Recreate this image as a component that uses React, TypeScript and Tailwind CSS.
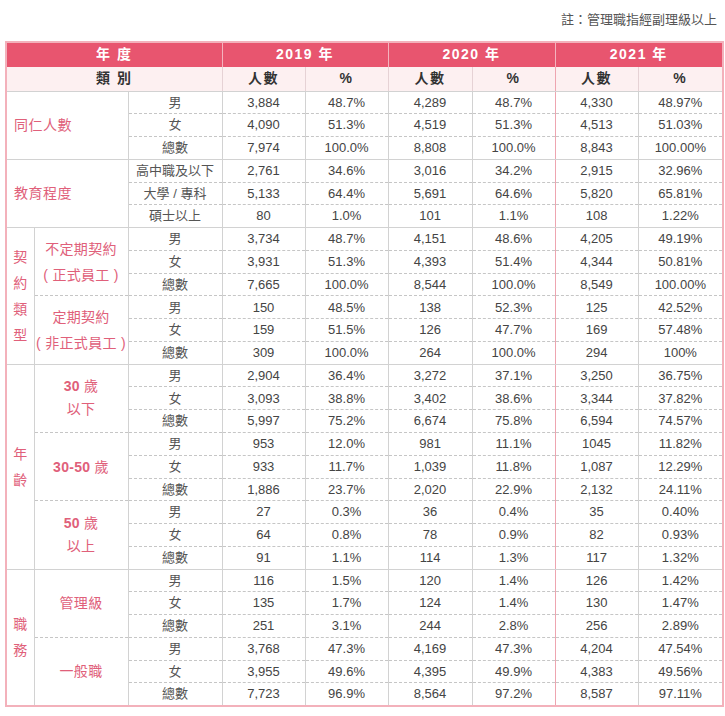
import React from "react";

type Row = { sub: string; v: string[] };
type Sub = { label: React.ReactNode; rows: Row[] };
type Section = { label: React.ReactNode; wide?: boolean; subs: Sub[] };

const L_GRAY = "[border-left:1px_solid_#d2d2d2]";
const L_PINK = "[border-left:1px_solid_#eea5b0]";
const B_DASH = "[border-bottom:1px_dashed_#c6c6c6]";
const B_SOLID = "[border-bottom:1px_solid_#d2d2d2]";

const r = (sub: string, ...v: string[]): Row => ({ sub, v });

const sections: Section[] = [
  {
    label: "同仁人數",
    wide: true,
    subs: [
      {
        label: null,
        rows: [
          r("男", "3,884", "48.7%", "4,289", "48.7%", "4,330", "48.97%"),
          r("女", "4,090", "51.3%", "4,519", "51.3%", "4,513", "51.03%"),
          r("總數", "7,974", "100.0%", "8,808", "100.0%", "8,843", "100.00%"),
        ],
      },
    ],
  },
  {
    label: "教育程度",
    wide: true,
    subs: [
      {
        label: null,
        rows: [
          r("高中職及以下", "2,761", "34.6%", "3,016", "34.2%", "2,915", "32.96%"),
          r("大學 / 專科", "5,133", "64.4%", "5,691", "64.6%", "5,820", "65.81%"),
          r("碩士以上", "80", "1.0%", "101", "1.1%", "108", "1.22%"),
        ],
      },
    ],
  },
  {
    label: "契約類型",
    subs: [
      {
        label: (
          <>
            <div>不定期契約</div>
            <div>( 正式員工 )</div>
          </>
        ),
        rows: [
          r("男", "3,734", "48.7%", "4,151", "48.6%", "4,205", "49.19%"),
          r("女", "3,931", "51.3%", "4,393", "51.4%", "4,344", "50.81%"),
          r("總數", "7,665", "100.0%", "8,544", "100.0%", "8,549", "100.00%"),
        ],
      },
      {
        label: (
          <>
            <div>定期契約</div>
            <div>( 非正式員工 )</div>
          </>
        ),
        rows: [
          r("男", "150", "48.5%", "138", "52.3%", "125", "42.52%"),
          r("女", "159", "51.5%", "126", "47.7%", "169", "57.48%"),
          r("總數", "309", "100.0%", "264", "100.0%", "294", "100%"),
        ],
      },
    ],
  },
  {
    label: "年齡",
    subs: [
      {
        label: (
          <div className="leading-[23px]">
            <div>
              <span className="font-bold">30</span> 歲
            </div>
            <div>以下</div>
          </div>
        ),
        rows: [
          r("男", "2,904", "36.4%", "3,272", "37.1%", "3,250", "36.75%"),
          r("女", "3,093", "38.8%", "3,402", "38.6%", "3,344", "37.82%"),
          r("總數", "5,997", "75.2%", "6,674", "75.8%", "6,594", "74.57%"),
        ],
      },
      {
        label: (
          <div>
            <span className="font-bold">30-50</span> 歲
          </div>
        ),
        rows: [
          r("男", "953", "12.0%", "981", "11.1%", "1045", "11.82%"),
          r("女", "933", "11.7%", "1,039", "11.8%", "1,087", "12.29%"),
          r("總數", "1,886", "23.7%", "2,020", "22.9%", "2,132", "24.11%"),
        ],
      },
      {
        label: (
          <div className="leading-[23px]">
            <div>
              <span className="font-bold">50</span> 歲
            </div>
            <div>以上</div>
          </div>
        ),
        rows: [
          r("男", "27", "0.3%", "36", "0.4%", "35", "0.40%"),
          r("女", "64", "0.8%", "78", "0.9%", "82", "0.93%"),
          r("總數", "91", "1.1%", "114", "1.3%", "117", "1.32%"),
        ],
      },
    ],
  },
  {
    label: "職務",
    subs: [
      {
        label: "管理級",
        rows: [
          r("男", "116", "1.5%", "120", "1.4%", "126", "1.42%"),
          r("女", "135", "1.7%", "124", "1.4%", "130", "1.47%"),
          r("總數", "251", "3.1%", "244", "2.8%", "256", "2.89%"),
        ],
      },
      {
        label: "一般職",
        rows: [
          r("男", "3,768", "47.3%", "4,169", "47.3%", "4,204", "47.54%"),
          r("女", "3,955", "49.6%", "4,395", "49.9%", "4,383", "49.56%"),
          r("總數", "7,723", "96.9%", "8,564", "97.2%", "8,587", "97.11%"),
        ],
      },
    ],
  },
];

function VerticalLabel({ text }: { text: string }) {
  return (
    <div className="flex flex-col items-center leading-[26px]">
      {Array.from(text).map((ch, i) => (
        <span key={i}>{ch}</span>
      ))}
    </div>
  );
}

export default function App() {
  const body: React.ReactNode[] = [];

  sections.forEach((sec, si) => {
    const total = sec.subs.reduce((n, s) => n + s.rows.length, 0);
    sec.subs.forEach((sub, bi) => {
      sub.rows.forEach((row, ri) => {
        const lastInSub = ri === sub.rows.length - 1;
        const lastInSec = lastInSub && bi === sec.subs.length - 1;
        const bottom = lastInSec ? B_SOLID : B_DASH;
        const first = bi === 0 && ri === 0;
        body.push(
          <tr key={`${si}-${bi}-${ri}`} className="h-[22.78px]">
            {first && sec.wide && (
              <td
                colSpan={2}
                rowSpan={total}
                className={`pl-[7px] text-left text-[14px] tracking-[0.5px] text-[#e0607a] ${B_SOLID}`}
              >
                {sec.label}
              </td>
            )}
            {first && !sec.wide && (
              <td rowSpan={total} className={`text-center text-[14px] text-[#e0607a] ${B_SOLID}`}>
                <VerticalLabel text={sec.label as string} />
              </td>
            )}
            {ri === 0 && !sec.wide && (
              <td
                rowSpan={sub.rows.length}
                className={`text-center text-[14px] leading-[26px] tracking-[0.3px] text-[#e0607a] ${L_GRAY} ${
                  bi === sec.subs.length - 1 ? B_SOLID : B_DASH
                }`}
              >
                {sub.label}
              </td>
            )}
            <td className={`text-center text-[13px] text-[#555] ${L_GRAY} ${lastInSub && sec.wide ? bottom : bottom}`}>
              {row.sub}
            </td>
            {row.v.map((val, vi) => (
              <td
                key={vi}
                className={`text-center text-[13px] text-[#444] ${vi === 4 ? L_PINK : L_GRAY} ${bottom}`}
              >
                {val}
              </td>
            ))}
          </tr>
        );
      });
    });
  });

  return (
    <div className="min-h-[716px] w-[725px] bg-white font-['Liberation_Sans','Noto_Sans_CJK_TC',sans-serif]">
      <div className="flex h-[30px] items-end justify-end pr-[8px] text-[13px] leading-[20px] text-[#555]">
        註：管理職指經副理級以上
      </div>
      <table className="ml-[5px] mt-[11px] w-[717px] table-fixed border-collapse [border:2px_solid_#f3b1bb]">
        <colgroup>
          <col className="w-[28px]" />
          <col className="w-[94px]" />
          <col className="w-[94px]" />
          <col className="w-[83px]" />
          <col className="w-[83px]" />
          <col className="w-[84px]" />
          <col className="w-[83px]" />
          <col className="w-[83px]" />
          <col className="w-[85px]" />
        </colgroup>
        <thead>
          <tr className="h-[24.5px] bg-[#e8556f] text-[14px] font-bold tracking-[1.5px] text-white">
            <th colSpan={3} className="font-bold">
              年 度
            </th>
            <th colSpan={2} className="[border-left:1px_solid_#f4b3be]">
              2019 年
            </th>
            <th colSpan={2} className="[border-left:1px_solid_#f4b3be]">
              2020 年
            </th>
            <th colSpan={2} className="[border-left:1px_solid_#f4b3be]">
              2021 年
            </th>
          </tr>
          <tr className="h-[24.5px] bg-[#fdf0f1] text-[14px] font-bold tracking-[1.5px] text-[#333]">
            <th colSpan={3} className={B_SOLID}>
              類 別
            </th>
            <th className={`[border-left:1px_solid_#e6d2d5] ${B_SOLID}`}>人數</th>
            <th className={`[border-left:1px_solid_#e6d2d5] ${B_SOLID}`}>%</th>
            <th className={`[border-left:1px_solid_#e6d2d5] ${B_SOLID}`}>人數</th>
            <th className={`[border-left:1px_solid_#e6d2d5] ${B_SOLID}`}>%</th>
            <th className={`${L_PINK} ${B_SOLID}`}>人數</th>
            <th className={`[border-left:1px_solid_#e6d2d5] ${B_SOLID}`}>%</th>
          </tr>
        </thead>
        <tbody>{body}</tbody>
      </table>
    </div>
  );
}
